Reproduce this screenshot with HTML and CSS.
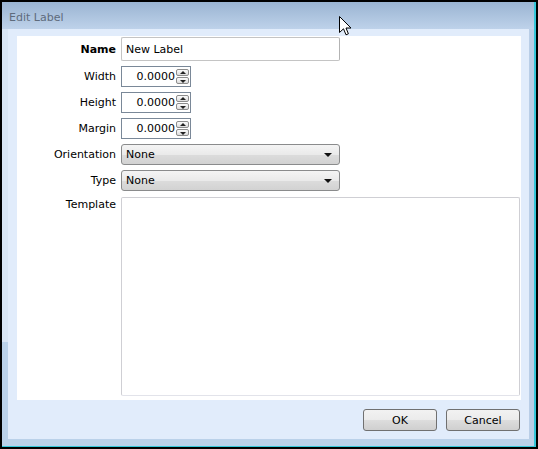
FILE: index.html
```html
<!DOCTYPE html>
<html lang="en">
<head>
  <meta charset="UTF-8">
  <title>Edit Label</title>
  <link rel="stylesheet" href="styles.css">
</head>
<body>
  <div class="window">
    <div class="frame">
      <div class="titlebar">Edit Label</div>
      <div class="body">
        <div class="body-row">
          <div class="edge-left"></div>
          <div class="inner">
            <div class="panel">
              <div class="form">
                <label class="lbl bold">Name</label>
                <div><input class="txt name" type="text" value="New Label"></div>

                <label class="lbl">Width</label>
                <div class="spin">
                  <input type="text" value="0.0000">
                  <div class="spin-btns"><span class="up"></span><span class="down"></span></div>
                </div>

                <label class="lbl">Height</label>
                <div class="spin">
                  <input type="text" value="0.0000">
                  <div class="spin-btns"><span class="up"></span><span class="down"></span></div>
                </div>

                <label class="lbl">Margin</label>
                <div class="spin">
                  <input type="text" value="0.0000">
                  <div class="spin-btns"><span class="up"></span><span class="down"></span></div>
                </div>

                <label class="lbl">Orientation</label>
                <div class="combo"><select><option>None</option></select></div>

                <label class="lbl">Type</label>
                <div class="combo"><select><option>None</option></select></div>

                <label class="lbl top">Template</label>
                <textarea class="tpl"></textarea>
              </div>
            </div>
            <div class="footer">
              <button class="btn">OK</button>
              <button class="btn">Cancel</button>
            </div>
          </div>
          <div class="edge-right"></div>
        </div>
        <div class="edge-bottom"></div>
      </div>
    </div>
    <svg class="cursor" width="13" height="21" viewBox="0 0 13 21">
      <path d="M0.5 0.5 L0.5 16.5 L4.5 12.8 L7 18.8 L9.4 17.8 L7 12 L12 12 Z" fill="#fff" stroke="#000" stroke-width="1" stroke-linejoin="miter"/>
    </svg>
  </div>
</body>
</html>
```

FILE: styles.css
```css
*{ margin: 0; padding: 0; box-sizing: border-box; }
body{
  width: 538px;
  height: 449px;
  overflow: hidden;
  font-family: "DejaVu Sans", Verdana, sans-serif;
  font-size: 11px;
  color: #000;
}
.window{
  position: relative;
  width: 538px;
  height: 449px;
  border: 2px solid #000;
}
.frame{
  height: 100%;
  display: flex;
  flex-direction: column;
  border-right: 2px solid #35c6d9;
  border-bottom: 1px solid #35c6d9;
}
.titlebar{
  height: 27px;
  padding: 9px 0 0 7px;
  color: #5e6b7c;
  background: linear-gradient(to bottom, #9ab4d2, #bed2ea);
}
.body{
  flex: 1;
  display: flex;
  flex-direction: column;
}
.body-row{
  flex: 1;
  display: flex;
}
.edge-left{
  width: 6px;
  background: linear-gradient(to bottom, #d8e5f4 0, #d8e5f4 313px, #bad1e9 313px);
}
.edge-right{
  width: 5px;
  background: #b9cee7;
}
.edge-bottom{
  height: 7px;
  background: #bad1e9;
}
.inner{
  flex: 1;
  display: flex;
  flex-direction: column;
  padding: 7px 8px 0 9px;
  background: #e1ecfb;
}
.panel{
  height: 364px;
  padding: 1px 1px 0 0;
  background: #fff;
}
.form{
  display: grid;
  grid-template-columns: 99px 1fr;
  column-gap: 5px;
  row-gap: 5px;
  align-items: center;
}
.lbl{
  text-align: right;
}
.lbl.bold{ font-weight: bold; }
.lbl.top{
  align-self: start;
  margin-top: 1px;
  padding-top: 1px;
}
input, select, textarea, button{
  font-family: inherit;
  font-size: 11px;
  color: #000;
  outline: none;
}
.txt.name{
  display: block;
  width: 219px;
  height: 24px;
  padding: 0 4px;
  border: 1px solid #c4c4c4;
  border-right-color: #b3b3b3;
  border-radius: 2px;
}
.spin{
  width: 70px;
  height: 21px;
  display: flex;
  border: 1px solid #7a8898;
}
.spin input{
  width: 54px;
  height: 19px;
  border: 0;
  text-align: right;
  padding-right: 1px;
}
.spin-btns{
  width: 14px;
  display: flex;
  flex-direction: column;
  justify-content: center;
  gap: 1px;
  padding: 1px 0;
}
.spin-btns span{
  position: relative;
  height: 7px;
  width: 13px;
  border: 1px solid #8c8c8c;
  border-radius: 2px;
  background: linear-gradient(to bottom, #fbfbfb, #dcdcdc);
}
.spin-btns span::after{
  content: "";
  position: absolute;
  left: 3px;
  top: 1px;
  border-left: 3px solid transparent;
  border-right: 3px solid transparent;
}
.spin-btns .up::after{ border-bottom: 3px solid #222; }
.spin-btns .down::after{ border-top: 3px solid #222; top: 2px; }
.combo{
  position: relative;
  width: 219px;
  height: 21px;
}
.combo select{
  -webkit-appearance: none;
  appearance: none;
  width: 100%;
  height: 100%;
  padding: 0 4px;
  border: 1px solid #8a8b8c;
  border-radius: 3px;
  background: linear-gradient(to bottom, #f4f4f4 0, #eaeaea 50%, #dcdcdc 51%, #d2d2d2 100%);
}
.combo::after{
  content: "";
  position: absolute;
  right: 8px;
  top: 9px;
  border-left: 4px solid transparent;
  border-right: 4px solid transparent;
  border-top: 4px solid #111;
  pointer-events: none;
}
.tpl{
  display: block;
  width: 399px;
  height: 199px;
  margin-top: 1px;
  resize: none;
  border: 1px solid #cfcfd4;
  border-bottom-color: #e2e3ea;
  border-radius: 2px;
}
.footer{
  display: flex;
  justify-content: flex-end;
  gap: 9px;
  padding: 9px 1px 0 0;
}
.btn{
  width: 74px;
  height: 22px;
  border: 1px solid #707070;
  border-radius: 3px;
  background: linear-gradient(to bottom, #f2f2f2 0, #ebebeb 50%, #dddddd 51%, #cfcfcf 100%);
}
.cursor{
  position: absolute;
  left: 337px;
  top: 14px;
}
```
